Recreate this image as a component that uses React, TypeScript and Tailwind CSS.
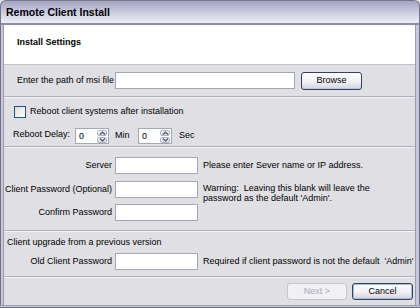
import React from 'react';

const Sep = () => (
  <div className="flex flex-col">
    <div className="h-px bg-[#b1b0b9]" />
    <div className="h-px bg-[#f4f4f7]" />
  </div>
);

const TextBox = ({ className = '' }: { className?: string }) => (
  <div className={`h-[17px] bg-white border border-[#a3a9b3] ${className}`} />
);

const Spinner = () => (
  <div className="flex items-stretch w-[34px] h-[16px] bg-white border border-[#a3a9b3]">
    <div className="flex-1 pl-[3px] leading-[14px]">0</div>
    <div className="w-[12px] flex flex-col gap-px p-px">
      <div className="flex-1 flex items-center justify-center rounded-[2px] border border-[#b4b3c8] bg-linear-to-b from-[#fbfbfd] to-[#d6d6e4]">
        <svg width="7" height="4" viewBox="0 0 7 4">
          <path d="M1 3.5 L3.5 1 L6 3.5" fill="none" stroke="#4d4d6a" strokeWidth="1.2" />
        </svg>
      </div>
      <div className="flex-1 flex items-center justify-center rounded-[2px] border border-[#b4b3c8] bg-linear-to-b from-[#fbfbfd] to-[#d6d6e4]">
        <svg width="7" height="4" viewBox="0 0 7 4">
          <path d="M1 0.5 L3.5 3 L6 0.5" fill="none" stroke="#4d4d6a" strokeWidth="1.2" />
        </svg>
      </div>
    </div>
  </div>
);

export default function App() {
  return (
    <div className="w-[420px] h-[308px] flex flex-col overflow-hidden bg-[#e0dfe3] text-black text-[9px] font-['Liberation_Sans',Arial,sans-serif]">
      {/* title bar */}
      <div className="h-[25px] shrink-0 flex items-center pl-[5px] rounded-t-[6px] border border-[#77768e] border-b-[2px] border-b-[#8d8ca6] bg-linear-to-b from-[#a5a4c3] via-[#cbcbdd] to-[#eeeef6]">
        <span className="text-[10.5px] font-bold leading-none">Remote Client Install</span>
      </div>

      <div className="flex flex-1 min-h-0">
        <div className="w-[4px] flex">
          <div className="w-px bg-[#6f6e84]" />
          <div className="w-[2px] bg-[#c9c8d9]" />
          <div className="w-px bg-[#9b9aae]" />
        </div>

        <div className="flex-1 flex flex-col">
          {/* header */}
          <div className="h-[40px] shrink-0 bg-white border-b border-[#c3c2cb] pl-[13px] pt-[12px]">
            <div className="font-bold leading-[11px]">Install Settings</div>
          </div>

          {/* msi path */}
          <div className="h-[31px] flex items-center">
            <div className="w-[111px] pl-[13px] whitespace-nowrap">Enter the path of msi file</div>
            <TextBox className="w-[180px]" />
            <button className="ml-[6px] w-[61px] h-[18px] rounded-[3px] border border-[#34405c] bg-linear-to-b from-white via-[#f3f3f7] to-[#d3d3e0] shadow-[inset_0_-1px_0_#c0c7de]">
              Browse
            </button>
          </div>
          <Sep />

          {/* reboot */}
          <div className="h-[48px] pt-[8px] flex flex-col">
            <div className="flex items-center pl-[10px] h-[12px]">
              <div className="w-[12px] h-[12px] border border-[#1c5180] bg-linear-to-br from-[#dcdcd8] to-white" />
              <span className="ml-[4px] whitespace-nowrap">Reboot client systems after installation</span>
            </div>
            <div className="mt-[10px] flex items-center h-[16px]">
              <div className="w-[71px] pl-[9px] -mt-[2px] whitespace-nowrap">Reboot Delay:</div>
              <Spinner />
              <div className="ml-[6px] w-[23px] -mt-[1px]">Min</div>
              <Spinner />
              <div className="ml-[7px] -mt-[1px]">Sec</div>
            </div>
          </div>
          <Sep />

          {/* server / passwords */}
          <div className="h-[82px] pt-[9px] flex flex-col">
            <div className="flex items-center h-[17px]">
              <div className="w-[108px] text-right whitespace-nowrap">Server</div>
              <TextBox className="ml-[3px] w-[83px]" />
              <div className="ml-[5px] whitespace-nowrap">Please enter Sever name or IP address.</div>
            </div>
            <div className="mt-[7px] flex items-start h-[17px]">
              <div className="w-[108px] text-right whitespace-nowrap leading-[17px]">Client Password (Optional)</div>
              <TextBox className="ml-[3px] w-[83px]" />
              <div className="ml-[5px] mt-[2px] whitespace-pre leading-[10px]">
                {"Warning:  Leaving this blank will leave the\npassword as the default 'Admin'."}
              </div>
            </div>
            <div className="mt-[6px] flex items-center h-[17px]">
              <div className="w-[108px] text-right whitespace-nowrap">Confirm Password</div>
              <TextBox className="ml-[3px] w-[83px]" />
            </div>
          </div>
          <Sep />

          {/* upgrade */}
          <div className="h-[44px] pt-[5px] flex flex-col">
            <div className="pl-[3px] leading-[11px] whitespace-nowrap">Client upgrade from a previous version</div>
            <div className="mt-[5px] flex items-center h-[17px]">
              <div className="w-[108px] text-right whitespace-nowrap">Old Client Password</div>
              <TextBox className="ml-[3px] w-[83px]" />
              <div className="ml-[5px] whitespace-pre">{"Required if client password is not the default  'Admin'"}</div>
            </div>
          </div>
          <Sep />

          {/* buttons */}
          <div className="flex-1 flex justify-end items-start pt-[5px] pr-[2px] gap-[5px]">
            <button disabled className="w-[60px] h-[17px] rounded-[3px] border border-[#c6c5cf] bg-[#f1f0f4] text-[#a9a8b3]">
              Next &gt;
            </button>
            <button className="w-[61px] h-[17px] rounded-[3px] border border-[#34405c] bg-linear-to-b from-white via-[#f3f3f7] to-[#d3d3e0] shadow-[inset_0_0_0_1px_#a9bde0]">
              Cancel
            </button>
          </div>
        </div>

        <div className="w-[5px] flex">
          <div className="w-px bg-[#9b9aae]" />
          <div className="w-[3px] bg-[#c9c8d9]" />
          <div className="w-px bg-[#6f6e84]" />
        </div>
      </div>

      <div className="h-[3px] shrink-0 flex flex-col">
        <div className="h-px bg-[#9b9aae]" />
        <div className="h-px bg-[#c9c8d9]" />
        <div className="h-px bg-[#6f6e84]" />
      </div>
    </div>
  );
}
